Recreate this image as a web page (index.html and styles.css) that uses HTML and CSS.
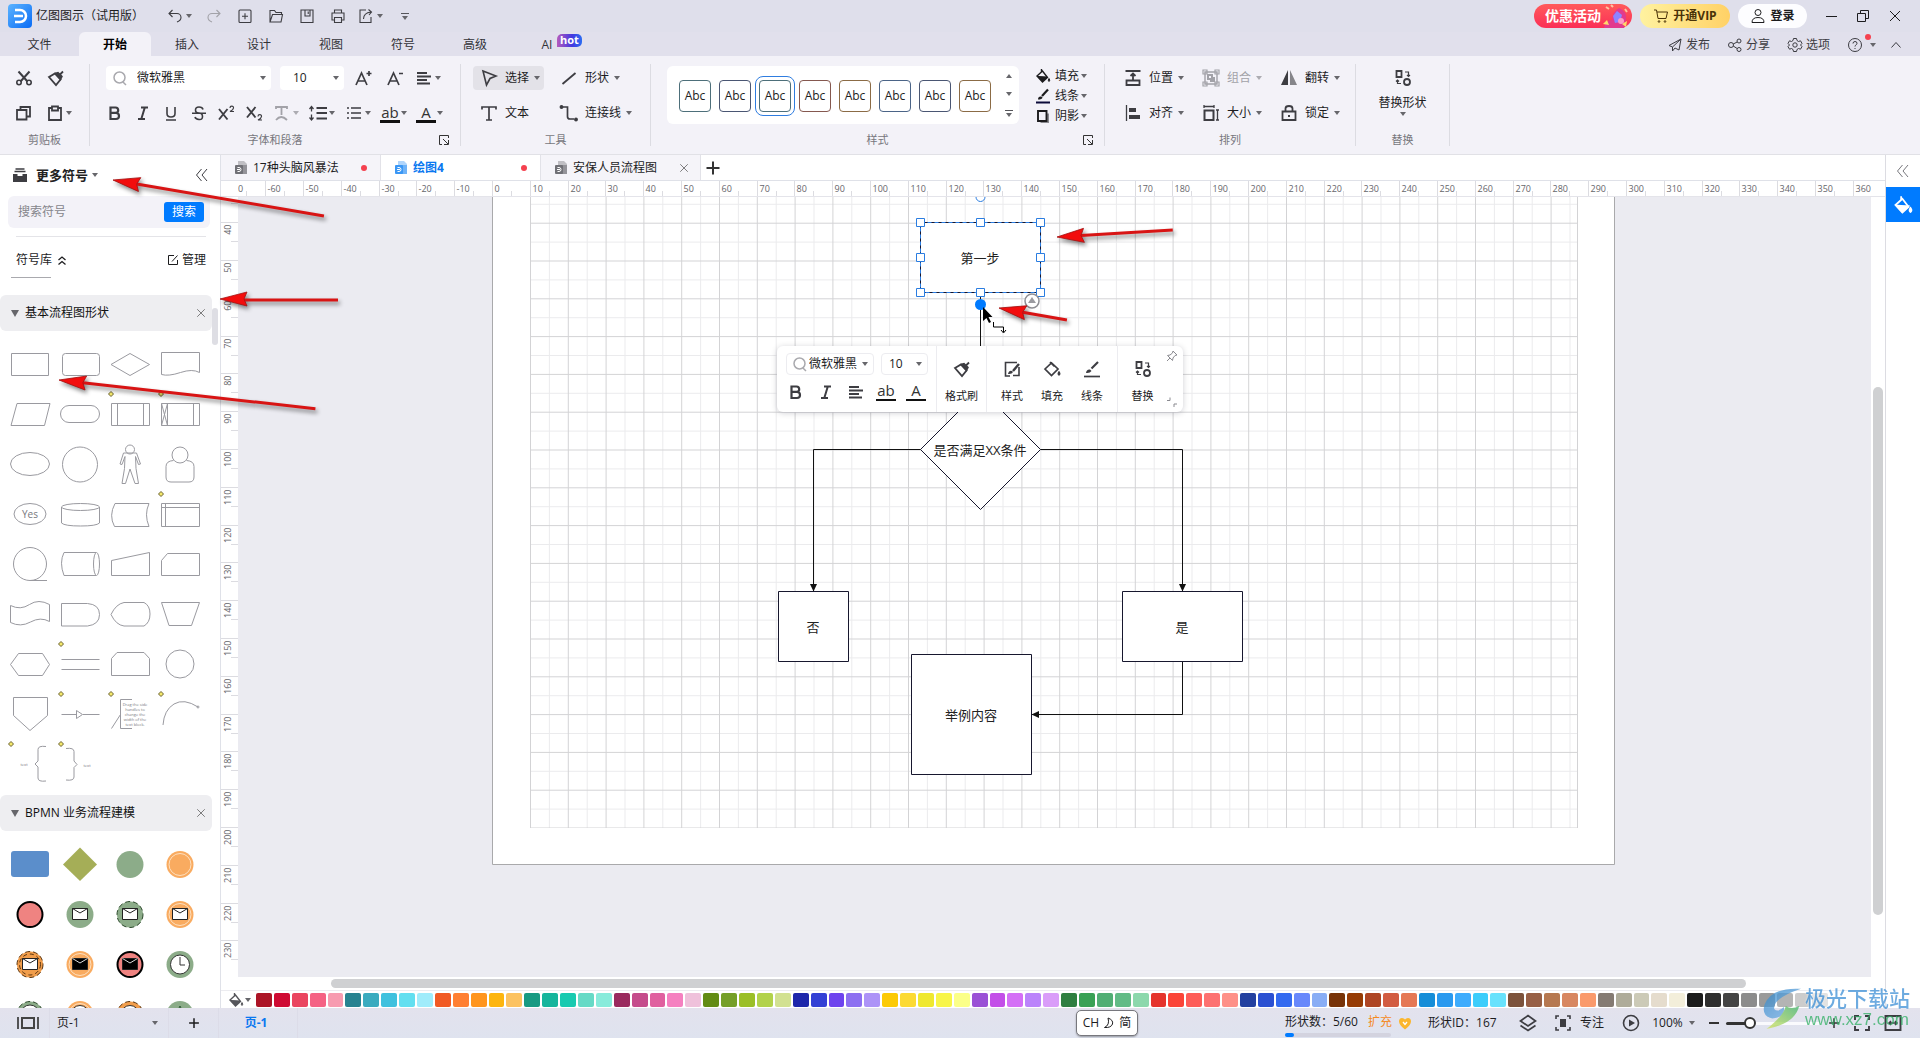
FILE: index.html
```html
<!DOCTYPE html>
<html lang="zh-CN">
<head>
<meta charset="utf-8">
<title>亿图图示</title>
<link rel="stylesheet" href="styles.css">
</head>
<body>
<svg class="sprite" aria-hidden="true">
  <defs>
    <linearGradient id="g-logo" x1="0" y1="0" x2="1" y2="1"><stop offset="0" stop-color="#5cb4ff"/><stop offset="1" stop-color="#0a6cf5"/></linearGradient>
    <linearGradient id="g-swirl" x1="0" y1="0" x2="1" y2="1"><stop offset="0" stop-color="#2f86c8"/><stop offset="1" stop-color="#7fb6ea"/></linearGradient>
    <linearGradient id="g-swirl2" x1="1" y1="0" x2="0" y2="1"><stop offset="0" stop-color="#3fb56a"/><stop offset="1" stop-color="#d5e35a"/></linearGradient>
  </defs>
  <symbol id="undo" viewBox="0 0 20 20"><path d="M7.500 4 4 7.500 7.500 11M4.500 7.500H12a4 4 0 0 1 4 4q0 3-4 4.500"/></symbol>
  <symbol id="redo" viewBox="0 0 20 20"><path d="M12.500 4 16 7.500 12.500 11M15.500 7.500H8a4 4 0 0 0-4 4q0 3 4 4.500"/></symbol>
  <symbol id="new" viewBox="0 0 20 20"><rect x="4" y="4" width="12" height="12.500" rx="1"/><path d="M10 7.200v6M7 10.200h6"/></symbol>
  <symbol id="open" viewBox="0 0 20 20"><path d="M4 16V4.500h4.500l1.500 2h5.500v2M4 16h11l1.500-7.500H6.500z"/></symbol>
  <symbol id="save" viewBox="0 0 20 20"><path d="M4 4h12v12.500H4zM8 4v6h5V4M11.200 5.500v2.500"/></symbol>
  <symbol id="print" viewBox="0 0 20 20"><path d="M6.500 7V4h7v3M6.500 14H4V7h12v7h-2.500M6.500 11.500h7v5h-7z"/></symbol>
  <symbol id="export" viewBox="0 0 20 20"><path d="M10 4H4v12.500h11V11M7.500 13q0-6 7.500-7M12.500 3.500 15.500 6l-2.500 3"/></symbol>
  <symbol id="min" viewBox="0 0 16 16"><path d="M3 8.500h11"/></symbol>
  <symbol id="restore" viewBox="0 0 16 16"><path d="M2.500 5.500h8v8h-8zM5.500 5.500v-3h8v8h-3"/></symbol>
  <symbol id="close" viewBox="0 0 16 16"><path d="m3 3 10 10M13 3 3 13"/></symbol>
  <symbol id="cart" viewBox="0 0 16 16"><path d="M1 2h2.500l1.500 8.500h8L14.500 4H4"/><circle cx="6" cy="13.500" r=".8"/><circle cx="12" cy="13.500" r=".8"/></symbol>
  <symbol id="user" viewBox="0 0 16 16"><circle cx="8" cy="4.500" r="3"/><path d="M2 14.500q0-5 6-5t6 5z"/></symbol>
  <symbol id="plane" viewBox="0 0 16 16"><path d="M14 2 2 8.500l3.500 1.500L14 2l-2 11-4-2M5.500 10v4L8 11"/></symbol>
  <symbol id="share" viewBox="0 0 16 16"><circle cx="4" cy="8" r="2.500"/><circle cx="12" cy="4" r="2"/><circle cx="12" cy="12.500" r="2"/><path d="m6.200 7 4-2M6.200 9l4 2.500"/></symbol>
  <symbol id="gear" viewBox="0 0 16 16"><path d="M6.500 1.500h3l.5 2 1.500 1 2-.7 1.500 2.600-1.500 1.600 1.500 1.600-1.500 2.600-2-.7-1.500 1-.5 2h-3l-.5-2-1.500-1-2 .7L1 9.600 2.500 8 1 6.400l1.500-2.600 2 .7 1.500-1z"/><circle cx="8" cy="8" r="2.200"/></symbol>
  <symbol id="help" viewBox="0 0 16 16"><circle cx="8" cy="8" r="6.500"/><path d="M6 6.500q0-2 2-2t2 1.800q0 1-1 1.600T8 9.500M8 11v1"/></symbol>
  <symbol id="up" viewBox="0 0 16 16"><path d="m3.500 10.500 4.500-5 4.500 5"/></symbol>
  <symbol id="collapse" viewBox="0 0 16 16"><path d="M7.500 2 2.500 8l5 6M13 2 8 8l5 6"/></symbol>
  <symbol id="cut" viewBox="0 0 20 20"><path d="m4.500 3.500 9 10M15.500 3.500l-9 10" stroke-width="2"/><circle cx="5" cy="14.500" r="2.200" stroke-width="1.600"/><circle cx="15" cy="14.500" r="2.200" stroke-width="1.600"/></symbol>
  <symbol id="painter" viewBox="0 0 20 20"><path d="m3 9 6-3.500 5.500 6L10 17 3 9zM11 6.500l3 3M12.500 8 17 3.500" stroke-width="1.800"/><path d="m9 5.500 3-1 4 4-1.500 3z" fill="currentColor"/></symbol>
  <symbol id="copy" viewBox="0 0 20 20"><path d="M3 7h9.500v9.500H3zM6.500 7V4H16v9.500h-3.500" stroke-width="1.800"/></symbol>
  <symbol id="paste" viewBox="0 0 20 20"><path d="M7 5H4v12h12V5h-3" stroke-width="1.800"/><path d="M7 3.500h6v4H7z" stroke-width="1.800"/></symbol>
  <symbol id="search" viewBox="0 0 16 16"><circle cx="7.500" cy="7.500" r="5.500" stroke-width="1.500"/><path d="m11 12 3 3" stroke-width="1.500"/></symbol>
  <symbol id="fontup" viewBox="0 0 20 20"><path d="M3 17 8.500 5 14 17M5 13h7M13.500 5.500h5M16 3v5" stroke-width="1.700"/></symbol>
  <symbol id="fontdown" viewBox="0 0 20 20"><path d="M3 17 8.500 5 14 17M5 13h7M14 5.500h4" stroke-width="1.700"/></symbol>
  <symbol id="align" viewBox="0 0 20 20"><path d="M3 5h10M3 8.500h14M3 12h10M3 15.500h13" stroke-width="1.800"/></symbol>
  <symbol id="bold" viewBox="0 0 20 20"><path d="M5.500 4.500h5a2.700 2.700 0 0 1 0 5.400h-5zM5.500 10h5.500a3 3 0 0 1 0 6H5.500z" stroke-width="2.200"/></symbol>
  <symbol id="italic" viewBox="0 0 20 20"><path d="M8 4.500h7M5 16h7M11.800 4.500 8.300 16" stroke-width="2"/></symbol>
  <symbol id="under" viewBox="0 0 20 20"><path d="M6 4v6.500q0 3.500 4 3.500t4-3.500V4M5 17h10" stroke-width="1.600"/></symbol>
  <symbol id="strike" viewBox="0 0 20 20"><path d="M14 6.500Q13.500 4 10 4T6.500 7 10 10t3.500 3.500-3.500 3-4-2.500M3 10.300h14" stroke-width="1.600"/></symbol>
  <symbol id="sup" viewBox="0 0 20 20"><path d="m2 6 8.500 10.500M10.500 6 2 16.500" stroke-width="1.900"/><path d="M13 5q0-1.800 1.800-1.800T16.500 5 13 8.500h4" stroke-width="1.200"/></symbol>
  <symbol id="sub" viewBox="0 0 20 20"><path d="m2 4 8.500 10.500M10.500 4 2 14.500" stroke-width="1.900"/><path d="M13 13.500q0-1.800 1.800-1.800t1.700 1.800T13 17h4" stroke-width="1.200"/></symbol>
  <symbol id="tstyle" viewBox="0 0 20 20"><path d="M4 6V4h11v2M9.500 4v8M4 17q5-6 11 0" stroke-width="1.800"/></symbol>
  <symbol id="linegap" viewBox="0 0 20 20"><path d="M8.500 5H19M8.500 10H19M8.500 15.500H19" stroke-width="1.800"/><path d="M3.500 3.500v5M3.500 11.500v5M1.500 6l2-2.500 2 2.500M1.500 14.500l2 2.500 2-2.500" stroke-width="1.300"/></symbol>
  <symbol id="list" viewBox="0 0 20 20"><path d="M7 5h10M7 10h10M7 15h10M3 5h2M3 10h2M3 15h2" stroke-width="1.700"/></symbol>
  <symbol id="cursor" viewBox="0 0 20 20"><path d="m4 3 13 5-6 2.500L7.500 17z" stroke-width="1.600"/></symbol>
  <symbol id="slash" viewBox="0 0 20 20"><path d="M3.500 16 16.500 5" stroke-width="1.800"/></symbol>
  <symbol id="text" viewBox="0 0 20 20"><path d="M3 6.500V4h14v2.500M10 4v13M7 17h6" stroke-width="1.700"/></symbol>
  <symbol id="connector" viewBox="0 0 20 20"><path d="M4 4h4.500v9.500q0 2.500 2.500 2.500h4" stroke-width="1.700"/><circle cx="2.500" cy="4" r="1.200" fill="currentColor"/><circle cx="17" cy="16.500" r="1.200" fill="currentColor"/></symbol>
  <symbol id="bucket" viewBox="0 0 16 16"><path d="m2 8 5.500-5 5 6.500-5 4.500zM6.500 1v3" stroke-width="1.400"/><path d="m3 8.500 9 .5-4.500 4.500zM14 10.500q1.500 2 0 3-1.500-1 0-3z" fill="currentColor"/></symbol>
  <symbol id="bucketline" viewBox="0 0 20 20"><path d="m3 10 6.500-6 6.500 6-6.500 6.500zM8 3l4.500 4.500" stroke-width="1.700"/><path d="M17 13q1.500 2 0 3-1.500-1 0-3z" fill="currentColor"/></symbol>
  <symbol id="pen" viewBox="0 0 16 16"><path d="M13 1.500 7 8" stroke-width="2.200"/><path d="M3 11.500q0-3.500 3.500-3l1 1Q7 11.500 3 11.500z" fill="currentColor" stroke="none"/><path d="M1 14.500h14" stroke="#0b0b3a" stroke-width="2"/></symbol>
  <symbol id="shadow" viewBox="0 0 16 16"><path d="M5.500 5.500H14V15H5.500z" fill="#8a8a8f" stroke="none"/><path d="M3 3h8.500v10H3z" fill="#f3f2f8" stroke-width="1.900"/></symbol>
  <symbol id="position" viewBox="0 0 20 20"><path d="M2.500 3h15M10 12V5.500M7.500 8 10 5.500 12.500 8M3.500 12.500h13V17h-13z" stroke-width="1.800"/></symbol>
  <symbol id="group" viewBox="0 0 20 20"><path d="M4 4h12v12H4z" stroke-width="1.400"/><path d="M2 2h4v4H2zM14 2h4v4h-4zM2 14h4v4H2zM14 14h4v4h-4z" stroke-width="1.200"/><path d="M7 7h4v4H7zM13 9v4H9" stroke-width="2"/></symbol>
  <symbol id="flip" viewBox="0 0 20 20"><path d="M9 2v15H2z" fill="currentColor" stroke="none"/><path d="M11 2v15h7z" fill="#85858a" stroke="none"/></symbol>
  <symbol id="alignobj" viewBox="0 0 20 20"><path d="M3.500 2v16" stroke-width="1.300"/><path d="M6 5h7v4H6zM6 12h11v4H6z" fill="currentColor" stroke="none"/></symbol>
  <symbol id="size" viewBox="0 0 20 20"><path d="M3.500 7.500h9V17h-9z" stroke-width="2"/><path d="M3 3.500h10M3 2v3M13 2v3M16.500 7v10M15 7h3M15 17h3" stroke-width="1.300"/></symbol>
  <symbol id="lock" viewBox="0 0 20 20"><path d="M3.500 8.500h13V17h-13zM6.500 8V5.500Q6.500 3 10 3t3.500 2.500V8" stroke-width="1.800"/><path d="M9 12h2v2H9z" fill="currentColor" stroke="none"/></symbol>
  <symbol id="swap" viewBox="0 0 20 20"><path d="M3.500 3h5v6h-5z" stroke-width="1.800"/><circle cx="14" cy="14" r="3" stroke-width="1.800"/><path d="M12 4h3.500v4M14 7l1.500 1.500L17 7M8 15.500H4.500V12M3 13.500 4.500 12 6 13.500" stroke-width="1.200"/></symbol>
  <symbol id="launch" viewBox="0 0 12 12"><path d="M4 10.500H1.500v-9h9V4M5 5l5 5M10.500 6v4.500H6"/></symbol>
  <symbol id="library" viewBox="0 0 16 16"><path d="M3.500 2h9M2.500 4.500h11" stroke-width="1.300"/><path d="M1 7h4.500v2h5V7H15v8H1z" fill="currentColor" stroke="none"/></symbol>
  <symbol id="dblup" viewBox="0 0 12 12"><path d="m2.500 6 3.500-3 3.500 3M2.500 10.500l3.500-3 3.500 3" stroke-width="1.300"/></symbol>
  <symbol id="edit" viewBox="0 0 12 12"><path d="M7 1.500H1.500v9h9V6M5 7.500 10.500 1.500"/></symbol>
  <symbol id="doc" viewBox="0 0 16 16"><path d="M5 1h6l3 3v10H5z" fill="currentColor" opacity=".4" stroke="none"/><path d="M9 5h5v9H9z" fill="currentColor" opacity=".55" stroke="none"/><rect x="2" y="5" width="8" height="9" rx="1" fill="currentColor" stroke="none"/><path d="M4.500 7.500H6q2 0 2 2t-2 2H4.500M4 9.500h3" stroke="#fff"/></symbol>
  <symbol id="plus" viewBox="0 0 16 16"><path d="M8 1.500v13M1.500 8h13" stroke-width="2"/></symbol>
  <symbol id="brushbox" viewBox="0 0 20 20"><path d="M8 17H3.500V3.500H15M17 8v8.500h-6" stroke-width="1.600"/><path d="m17 5-6 7" stroke-width="2.400"/><path d="M6 15q1-4 4-3l1 1q-1 2.500-5 2z" fill="currentColor" stroke="none"/></symbol>
  <symbol id="penline" viewBox="0 0 20 20"><path d="M16 3 9.500 9.500" stroke-width="2.200"/><path d="M4 14q.5-4 4-3.500l1.500 1.500Q8 14.500 4 14z" fill="currentColor" stroke="none"/><path d="M2 17.500h16" stroke-width="1.700"/></symbol>
  <symbol id="pin" viewBox="0 0 12 12"><path d="m7 1 4 4-2 .5L7 8l-.5 2.500-5-5L4 5l2.500-2zM4 8l-3 3"/></symbol>
  <symbol id="corner" viewBox="0 0 12 12"><path d="M4 1.500V4.500H1M8 11V8h3"/></symbol>
  <symbol id="pages" viewBox="0 0 24 16"><path d="M2 2v12M22 2v12" stroke-width="1.800"/><path d="M6 3h12v10H6z" stroke-width="2"/></symbol>
  <symbol id="layers" viewBox="0 0 20 20"><path d="m2.500 8 7.500-5.500L17.500 8 10 13z" stroke-width="1.700"/><path d="m2.500 12.500 7.500 5 7.500-5" stroke-width="1.700"/></symbol>
  <symbol id="focus" viewBox="0 0 20 20"><path d="M6 3H3v3M14 3h3v3M6 17H3v-3M14 17h3v-3" stroke-width="1.600"/><path d="M7 6h6v8H7z" fill="currentColor" stroke="none"/></symbol>
  <symbol id="play" viewBox="0 0 20 20"><circle cx="10" cy="10" r="7.500" stroke-width="1.600"/><path d="m8 6.500 6 3.500-6 3.500z" fill="currentColor" stroke="none"/></symbol>
  <symbol id="full" viewBox="0 0 20 20"><path d="M7 3H3v4M13 3h4v4M7 17H3v-4M13 17h4v-4" stroke-width="1.900"/></symbol>
  <symbol id="fit" viewBox="0 0 20 20"><path d="M2.500 3h15v14h-15z" stroke-width="1.900"/><path d="M6 10h8M8 8l-2 2 2 2M12 8l2 2-2 2" stroke-width="1.500"/></symbol>
  <symbol id="heart" viewBox="0 0 16 16"><path d="M8 14.500Q2 10 2 6.500 2 3 5 3q2 0 3 1.500Q9 3 11 3q3 0 3 3.500 0 3.500-6 8z" fill="#fbb62c" stroke="none"/><path d="m6 7 2 2.500L10 7" stroke="#fff" stroke-width="1.300"/></symbol>
  <symbol id="moon" viewBox="0 0 12 12"><path d="M5 1q5.500 2 4.500 6-1.500 4-8 3.500Q7 8 5 1z"/></symbol>
  <symbol id="handle" viewBox="0 0 6 6"><path d="m3 .5 2.500 2.500L3 5.500.5 3z" fill="#f4e96a" stroke="#6a6130"/></symbol>
  <symbol id="env" viewBox="0 0 16 12"><path d="M.5.500h15v11H.5z" fill="#fff"/><path d="m.5.500 7.500 4.500 7.500-4.500"/></symbol>
  <symbol id="envdark" viewBox="0 0 16 12"><path d="M.5.500h15v11H.5z" fill="#000"/><path d="m.5.500 7.500 4.500 7.500-4.500" stroke="#ddd"/></symbol>
</svg>

<header class="titlebar">
  <div class="brand">
    <svg class="logo" viewBox="0 0 24 24"><rect width="24" height="24" rx="4" fill="url(#g-logo)"/><path d="M7 6h5a6 6 0 0 1 0 12H7M6 12h9" fill="none" stroke="#fff" stroke-width="2.500"/></svg>
    <span>亿图图示（试用版）</span>
  </div>
  <div class="quick">
    <button class="drop" aria-label="撤销"><svg class="i thin"><use href="#undo"/></svg><span class="caret"></span></button>
    <button class="q off" aria-label="重做"><svg class="i thin"><use href="#redo"/></svg></button>
    <button class="q" aria-label="新建"><svg class="i thin"><use href="#new"/></svg></button>
    <button class="q" aria-label="打开"><svg class="i thin"><use href="#open"/></svg></button>
    <button class="q" aria-label="保存"><svg class="i thin"><use href="#save"/></svg></button>
    <button class="q" aria-label="打印"><svg class="i thin"><use href="#print"/></svg></button>
    <button class="drop" aria-label="导出"><svg class="i thin"><use href="#export"/></svg><span class="caret"></span></button>
    <button class="q" aria-label="自定义"><span class="caret lined"></span></button>
  </div>
  <div class="account">
    <button class="pill promo">优惠活动<svg viewBox="0 0 28 24"><path d="M3 24q2-8 8-8 1-9 7-12 8 3 7 12l-2 8z" fill="#e23a8e"/><path d="m12 12 4-5 5 4-2 7-5 1z" fill="#8c84ff"/><path d="m2 20 4-4 2 5zM21 20l5-3-1 6z" fill="#ffd76a"/><path d="M5 3l3 2M10 1l2 2M24 5l2 3" stroke="#ffc3a0" stroke-width="2"/><circle cx="20" cy="17" r="3" fill="#ff9ac4"/></svg></button>
    <button class="pill vip"><svg class="s"><use href="#cart"/></svg>开通VIP</button>
    <button class="pill login"><svg class="s"><use href="#user"/></svg>登录</button>
    <div class="winbtns">
      <button aria-label="最小化"><svg class="s"><use href="#min"/></svg></button>
      <button aria-label="还原"><svg class="s"><use href="#restore"/></svg></button>
      <button aria-label="关闭"><svg class="s"><use href="#close"/></svg></button>
    </div>
  </div>
</header>

<nav class="menubar">
  <div class="menus">
    <button class="first">文件</button><button class="active">开始</button><button>插入</button><button>设计</button><button>视图</button><button>符号</button><button>高级</button><button>AI<span class="hot">hot</span></button>
  </div>
  <div class="menuright">
    <button><svg class="s"><use href="#plane"/></svg>发布</button>
    <button><svg class="s"><use href="#share"/></svg>分享</button>
    <button><svg class="s"><use href="#gear"/></svg>选项</button>
    <button class="helpbtn" aria-label="帮助"><svg class="s"><use href="#help"/></svg><i class="dot"></i><span class="caret"></span></button>
    <button aria-label="收起功能区"><svg class="s"><use href="#up"/></svg></button>
  </div>
</nav>

<section class="ribbon">
  <div class="group clip">
    <div class="row"><button class="b" aria-label="剪切"><svg class="i"><use href="#cut"/></svg></button><button class="b" aria-label="格式刷"><svg class="i"><use href="#painter"/></svg></button></div>
    <div class="row"><button class="b" aria-label="复制"><svg class="i"><use href="#copy"/></svg></button><button class="drop" aria-label="粘贴"><svg class="i"><use href="#paste"/></svg><span class="caret"></span></button></div>
    <div class="label"><span>剪贴板</span></div>
  </div>
  <div class="group font">
    <div class="row fields">
      <label class="combo wide"><svg class="s faint"><use href="#search"/></svg><select aria-label="字体"><option>微软雅黑</option></select><span class="caret"></span></label>
      <label class="combo num"><select aria-label="字号"><option>10</option></select><span class="caret"></span></label>
      <button class="b w32" aria-label="增大字号"><svg class="i"><use href="#fontup"/></svg></button><button class="b w32" aria-label="减小字号"><svg class="i"><use href="#fontdown"/></svg></button><button class="drop" aria-label="对齐"><svg class="i"><use href="#align"/></svg><span class="caret"></span></button>
    </div>
    <div class="row">
      <button class="b" aria-label="加粗"><svg class="i"><use href="#bold"/></svg></button><button class="b" aria-label="斜体"><svg class="i"><use href="#italic"/></svg></button><button class="b" aria-label="下划线"><svg class="i"><use href="#under"/></svg></button><button class="b" aria-label="删除线"><svg class="i"><use href="#strike"/></svg></button><button class="b" aria-label="上标"><svg class="i"><use href="#sup"/></svg></button><button class="b" aria-label="下标"><svg class="i"><use href="#sub"/></svg></button>
      <button class="drop off" aria-label="文字样式"><svg class="i"><use href="#tstyle"/></svg><span class="caret"></span></button><button class="drop" aria-label="行距"><svg class="i"><use href="#linegap"/></svg><span class="caret"></span></button><button class="drop" aria-label="列表"><svg class="i"><use href="#list"/></svg><span class="caret"></span></button><button class="drop"><span class="glyph">ab</span><span class="caret"></span></button><button class="drop"><span class="glyph">A</span><span class="caret"></span></button>
    </div>
    <div class="label"><span>字体和段落</span><button class="launch" aria-label="更多字体设置"><svg><use href="#launch"/></svg></button></div>
  </div>
  <div class="group tools">
    <div class="row"><button class="tool on"><svg class="i"><use href="#cursor"/></svg><span>选择</span><span class="caret"></span></button><button class="tool"><svg class="i"><use href="#slash"/></svg><span>形状</span><span class="caret"></span></button></div>
    <div class="row"><button class="tool"><svg class="i"><use href="#text"/></svg><span>文本</span></button><button class="tool"><svg class="i"><use href="#connector"/></svg><span>连接线</span><span class="caret"></span></button></div>
    <div class="label"><span>工具</span></div>
  </div>
  <div class="group styles">
    <div class="stylebody">
      <div class="gallery">
        <button class="c1">Abc</button><button class="c2">Abc</button><button class="c1 sel">Abc</button><button class="c3">Abc</button><button class="c4">Abc</button><button class="c5">Abc</button><button class="c2">Abc</button><button class="c4">Abc</button>
        <div class="scroller"><span class="caret flip"></span><span class="caret"></span><span class="caret lined"></span></div>
      </div>
      <div class="stack">
        <button><svg class="s"><use href="#bucket"/></svg><span>填充</span><span class="caret"></span></button>
        <button><svg class="s"><use href="#pen"/></svg><span>线条</span><span class="caret"></span></button>
        <button><svg class="s"><use href="#shadow"/></svg><span>阴影</span><span class="caret"></span></button>
      </div>
    </div>
    <div class="label"><span>样式</span><button class="launch" aria-label="更多样式设置"><svg><use href="#launch"/></svg></button></div>
  </div>
  <div class="group arrange">
    <div class="row"><button class="tool"><svg class="i"><use href="#position"/></svg><span>位置</span><span class="caret"></span></button><button class="tool off"><svg class="i"><use href="#group"/></svg><span>组合</span><span class="caret"></span></button><button class="tool"><svg class="i"><use href="#flip"/></svg><span>翻转</span><span class="caret"></span></button></div>
    <div class="row"><button class="tool"><svg class="i"><use href="#alignobj"/></svg><span>对齐</span><span class="caret"></span></button><button class="tool"><svg class="i"><use href="#size"/></svg><span>大小</span><span class="caret"></span></button><button class="tool"><svg class="i"><use href="#lock"/></svg><span>锁定</span><span class="caret"></span></button></div>
    <div class="label"><span>排列</span></div>
  </div>
  <div class="group replace">
    <button class="tall"><svg class="i"><use href="#swap"/></svg><span>替换形状</span><span class="caret"></span></button>
    <div class="label"><span>替换</span></div>
  </div>
</section>

<main class="workspace">
  <aside class="sidebar">
    <div class="sidehead"><svg class="s"><use href="#library"/></svg><button class="more">更多符号<span class="caret"></span></button><button class="fold" aria-label="收起"><svg class="s"><use href="#collapse"/></svg></button></div>
    <form class="search"><input type="text" placeholder="搜索符号" aria-label="搜索符号"><button type="button">搜索</button></form>
    <div class="libhead"><button>符号库<svg class="xs"><use href="#dblup"/></svg></button><button><svg class="xs"><use href="#edit"/></svg>管理</button></div>
    <div class="peek"></div>
    <div class="lists">
      <div class="secthead"><span class="caret big"></span><h2>基本流程图形状</h2><button aria-label="关闭"><svg class="s"><use href="#close"/></svg></button></div>
      <div class="symbols">
        <svg viewBox="0 0 50 50"><path d="M6.500 14.500h37v22h-37z"/></svg>
        <svg viewBox="0 0 50 50"><rect x="7.500" y="14.500" width="37" height="22" rx="3"/></svg>
        <svg viewBox="0 0 50 50"><path d="m6 25.500 19-11 19.500 11-19.500 11z"/></svg>
        <svg viewBox="0 0 50 50"><path d="M6.500 13.500h38v20q-7-4-19 0t-19 2z"/></svg>
        <svg viewBox="0 0 50 50"><path d="M12 14.500h33l-5.500 22H6z"/></svg>
        <svg viewBox="0 0 50 50"><rect x="5.500" y="16.500" width="39" height="17" rx="8.500"/></svg>
        <svg viewBox="0 0 50 50"><path d="M6.500 14.500h38v22h-38zM12.500 14.500v22M38.500 14.500v22"/><use href="#handle" x="3" y="2" width="6" height="6"/></svg>
        <svg viewBox="0 0 50 50"><path d="M6.500 14.500h38v22h-38zM12.500 14.500v22M38.500 14.500v22M6.500 14.500l6 22M12.500 14.500l-6 22"/><use href="#handle" x="3" y="2" width="6" height="6"/></svg>
        <svg viewBox="0 0 50 50"><ellipse cx="25" cy="25" rx="19.500" ry="11.500"/></svg>
        <svg viewBox="0 0 50 50"><circle cx="25" cy="25.500" r="17.500"/></svg>
        <svg viewBox="0 0 50 50"><circle cx="25" cy="10.500" r="4.500"/><path d="M18.500 14h13l4 11-2 .5-3-8 .5 12 2.500 15h-3.500L25 30l-4.500 14.500H17L19.500 29.500 20 17.500l-3 8-2-.5z"/></svg>
        <svg viewBox="0 0 50 50"><circle cx="25" cy="16" r="8"/><path d="M18.500 21.500q-7.500.5-7.500 6V38q0 5 5 5h18q5 0 5-5V27.500q0-5.500-7.500-6"/></svg>
        <svg viewBox="0 0 50 50"><ellipse cx="25" cy="25" rx="16" ry="10.500"/><text x="25" y="29" text-anchor="middle" class="yes">Yes</text></svg>
        <svg viewBox="0 0 50 50"><ellipse cx="25.500" cy="18" rx="19" ry="3.500"/><path d="M6.500 18v16q3 3 19 3t19-3V18"/></svg>
        <svg viewBox="0 0 50 50"><path d="M10 14.500h34q-5 11 0 23H9.500q-6-11 .5-23z"/></svg>
        <svg viewBox="0 0 50 50"><path d="M6.500 14.500h38v23h-38zM10.500 14.500v23M6.500 18.500h38"/><use href="#handle" x="3" y="2" width="6" height="6"/></svg>
        <svg viewBox="0 0 50 50"><circle cx="25" cy="25" r="16.500"/><path d="M25 41.500h17"/></svg>
        <svg viewBox="0 0 50 50"><path d="M41 13.500H9q-5 10 0 23h32"/><ellipse cx="41.500" cy="25" rx="3" ry="11.500"/></svg>
        <svg viewBox="0 0 50 50"><path d="M6.500 21.500 44.500 13.500v23h-38z"/></svg>
        <svg viewBox="0 0 50 50"><path d="M12.500 14.500h32v22h-38v-15z"/></svg>
        <svg viewBox="0 0 50 50"><path d="M5.500 16.500q10 5 19-1t20 0v17q-9-5-19 .5t-20 .5z"/></svg>
        <svg viewBox="0 0 50 50"><path d="M6.500 14.500h26q12 1 12 11t-12 11.500h-26z"/></svg>
        <svg viewBox="0 0 50 50"><path d="M19 13.500h20q6 3 6 11.500t-6 12H19Q11 36 6 25.500 11 15 19 13.500z"/></svg>
        <svg viewBox="0 0 50 50"><path d="M6.500 13.500h38l-8 23H14z"/></svg>
        <svg viewBox="0 0 50 50"><path d="m5.500 25.500 8-11h24l7 11-7 11h-24z"/></svg>
        <svg viewBox="0 0 50 50"><path d="M6.500 20.500h38M6.500 30.500h38"/><use href="#handle" x="3" y="2" width="6" height="6"/></svg>
        <svg viewBox="0 0 50 50"><path d="M12 13.500h27l5.500 6v17h-38v-17z"/></svg>
        <svg viewBox="0 0 50 50"><circle cx="25" cy="25" r="14"/></svg>
        <svg viewBox="0 0 50 50"><path d="M8.500 8.500h34v18L25 41.500l-16.500-15z"/></svg>
        <svg viewBox="0 0 50 50"><path d="M6.500 25.500h15M28 25.500h16.500M21.500 21.500v8l6-4z"/><use href="#handle" x="3" y="2" width="6" height="6"/></svg>
        <svg viewBox="0 0 50 50"><path d="M27 10.500H15.500v29H27M15.500 25.500l-9 14"/><g class="tiny"><text x="30" y="17">Drag the side</text><text x="30" y="22">handles to</text><text x="30" y="27">change the</text><text x="30" y="32">width of the</text><text x="30" y="37">text block.</text></g><use href="#handle" x="3" y="2" width="6" height="6"/></svg>
        <svg viewBox="0 0 50 50"><path d="M8 36q1-15 11-21t24 3"/><circle cx="43" cy="18" r="1"/><use href="#handle" x="3" y="2" width="6" height="6"/></svg>
        <svg viewBox="0 0 50 50"><path d="M41 7.500q-8-1-8 3V22l-3 3 3 3v11q0 4 8 3"/><text x="19" y="27" class="tiny">text</text><use href="#handle" x="3" y="2" width="6" height="6"/></svg>
        <svg viewBox="0 0 50 50"><path d="M11 9.500q8-1 8 3V22l3 3.500-3 3V38q0 4-8 3"/><text x="32" y="28" class="tiny">text</text><use href="#handle" x="3" y="2" width="6" height="6"/></svg>
      </div>
      <div class="secthead"><span class="caret big"></span><h2>BPMN 业务流程建模</h2><button aria-label="关闭"><svg class="s"><use href="#close"/></svg></button></div>
      <div class="symbols bpmn">
        <svg viewBox="0 0 50 50"><rect x="6" y="12" width="38" height="26" rx="3" fill="#5b8ecb"/></svg>
        <svg viewBox="0 0 50 50"><path d="m25 8.500 17 17-17 16.500L8 25.500z" fill="#a5ae57"/></svg>
        <svg viewBox="0 0 50 50"><circle cx="25" cy="25.500" r="13.500" fill="#8cac89"/></svg>
        <svg viewBox="0 0 50 50"><circle cx="25" cy="25.500" r="13.500" fill="#f9ab60"/><circle cx="25" cy="25.500" r="11" stroke="#fde0c0"/></svg>
        <svg viewBox="0 0 50 50"><circle cx="25" cy="25.500" r="12.500" fill="#ef8381" stroke="#000" stroke-width="2"/></svg>
        <svg viewBox="0 0 50 50"><circle cx="25" cy="25.500" r="13.500" fill="#8cac89"/><use href="#env" x="17" y="19" width="16" height="12" class="ink"/></svg>
        <svg viewBox="0 0 50 50"><circle cx="25" cy="25.500" r="13" fill="#8cac89" stroke="#2d4a2c" stroke-dasharray="5 3"/><use href="#env" x="17" y="19" width="16" height="12" class="ink"/></svg>
        <svg viewBox="0 0 50 50"><circle cx="25" cy="25.500" r="13.500" fill="#f9ab60"/><circle cx="25" cy="25.500" r="11" stroke="#fde0c0"/><use href="#env" x="17" y="19" width="16" height="12" class="ink"/></svg>
        <svg viewBox="0 0 50 50"><circle cx="25" cy="25.500" r="13" fill="#f19d4b" stroke="#5b3510" stroke-dasharray="5 3"/><circle cx="25" cy="25.500" r="10.500" stroke="#5b3510" stroke-dasharray="4 3"/><use href="#env" x="17" y="19" width="16" height="12" class="ink"/></svg>
        <svg viewBox="0 0 50 50"><circle cx="25" cy="25.500" r="13.500" fill="#f9ab60"/><circle cx="25" cy="25.500" r="11" stroke="#fde0c0"/><use href="#envdark" x="17" y="19" width="16" height="12" class="ink"/></svg>
        <svg viewBox="0 0 50 50"><circle cx="25" cy="25.500" r="12.500" fill="#ef8381" stroke="#000" stroke-width="2"/><use href="#envdark" x="17" y="19" width="16" height="12" class="ink"/></svg>
        <svg viewBox="0 0 50 50"><circle cx="25" cy="25.500" r="13.500" fill="#8cac89"/><circle cx="25" cy="25.500" r="9.500" fill="#fff" stroke="#333"/><path d="M25 18v8h5" stroke="#333"/></svg>
        <svg viewBox="0 0 50 50"><circle cx="25" cy="25.500" r="13" fill="#8cac89" stroke="#2d4a2c" stroke-dasharray="5 3"/><circle cx="25" cy="25.500" r="9.500" fill="#fff" stroke="#333"/></svg>
        <svg viewBox="0 0 50 50"><circle cx="25" cy="25.500" r="13.500" fill="#f9ab60"/><circle cx="25" cy="25.500" r="11" stroke="#fde0c0"/><circle cx="25" cy="25.500" r="9" fill="#fff" stroke="#333"/></svg>
        <svg viewBox="0 0 50 50"><circle cx="25" cy="25.500" r="13" fill="#f19d4b" stroke="#5b3510" stroke-dasharray="5 3"/><circle cx="25" cy="25.500" r="9" fill="#fff" stroke="#333"/></svg>
        <svg viewBox="0 0 50 50"><circle cx="25" cy="25.500" r="13.500" fill="#8cac89"/><path d="m25 17 7 15H18z" stroke="#2d5a35"/></svg>
      </div>
      <div class="sidethumb"></div>
    </div>
  </aside>

  <section class="editor">
    <div class="doctabs">
      <button class="doctab"><svg class="s"><use href="#doc"/></svg><span>17种头脑风暴法</span><i class="dot"></i></button>
      <button class="doctab current"><svg class="s"><use href="#doc"/></svg><span>绘图4</span><i class="dot"></i></button>
      <button class="doctab"><svg class="s"><use href="#doc"/></svg><span>安保人员流程图</span><svg class="xs"><use href="#close"/></svg></button>
      <button class="addtab" aria-label="新建绘图"><svg class="s"><use href="#plus"/></svg></button>
    </div>
    <div class="ruler-h"><svg id="rulerH"></svg></div>
    <div class="stage">
      <div class="ruler-v"><svg id="rulerV"></svg></div>
      <div class="canvas">
        <svg class="drawing">
          <defs>
            <pattern id="grid" x="530" y="71.500" width="37.800" height="37.800" patternUnits="userSpaceOnUse"><path d="M19.400 0v37.800M0 19.400h37.800" stroke="#ebebed"/><path d="M.5 0v37.800M0 .5h37.800" stroke="#d3d3d5"/></pattern>
            <marker id="tip" viewBox="0 0 8 8" refX="7" refY="4" markerWidth="8" markerHeight="8" markerUnits="userSpaceOnUse" orient="auto"><path d="M0 .5 7.500 4 0 7.500z" fill="#111"/></marker>
          </defs>
          <g transform="translate(-238 -197)">
            <path d="M492.500 100h1122v764.500h-1122z" fill="#fff" stroke="#a9a9ab"/>
            <path d="M530 100h1047v728H530z" fill="url(#grid)"/>
            <path d="M1577.500 190v638" stroke="#d3d3d5"/>
            <g class="shape">
              <path d="M920.500 222.500h120v70h-120zM920.500 449.500l60-60 60 60-60 60zM778.500 591.500h70v70h-70zM1122.500 591.500h120v70h-120zM911.500 654.500h120v120h-120z"/>
            </g>
            <g class="wire">
              <path d="M980.500 293v54M920.500 449.500h-107V591" marker-end="url(#tip)"/>
              <path d="M1040.500 449.500h142V591" marker-end="url(#tip)"/>
              <path d="M1182.500 662v52.500H1032" marker-end="url(#tip)"/>
            </g>
            <g class="caption">
              <text x="980" y="263">第一步</text><text x="980" y="455">是否满足XX条件</text><text x="813" y="632">否</text><text x="1182" y="632">是</text><text x="971" y="720">举例内容</text>
            </g>
            <g class="selection">
              <circle cx="980.500" cy="197" r="4.500"/>
              <path class="dash" d="M920.500 222.500h120v70h-120z"/>
              <path d="M916.500 218.500h8v8h-8zM976.500 218.500h8v8h-8zM1036.500 218.500h8v8h-8zM916.500 253.500h8v8h-8zM1036.500 253.500h8v8h-8zM916.500 288.500h8v8h-8zM976.500 288.500h8v8h-8zM1036.500 288.500h8v8h-8z"/>
            </g>
            <circle cx="980.500" cy="304.500" r="5.500" fill="#007bff"/>
            <circle cx="1032" cy="301" r="7" fill="#fff" stroke="#8f8f94" stroke-width="1.500"/><path d="m1032 297 4 6h-8z" fill="#9b9ba0"/>
            <path d="M983 307v14l3.500-3 2.500 5 2-1-2.500-5h4z" fill="#000"/><path d="M993.500 322v5h10v5M1001 330l2.500 3 2.500-3" fill="none" stroke="#000"/>
          </g>
        </svg>
        <div class="floatbar">
          <div class="fb-font">
            <div class="fb-row fb-fields"><label class="combo mini"><svg class="s faint"><use href="#search"/></svg><select aria-label="字体"><option>微软雅黑</option></select><span class="caret"></span></label><label class="combo mini small"><select aria-label="字号"><option>10</option></select><span class="caret"></span></label></div>
            <div class="fb-row"><button aria-label="加粗"><svg class="i"><use href="#bold"/></svg></button><button aria-label="斜体"><svg class="i"><use href="#italic"/></svg></button><button aria-label="对齐"><svg class="i"><use href="#align"/></svg></button><button><span class="glyph">ab</span></button><button><span class="glyph">A</span></button></div>
          </div>
          <div class="fb-group one"><button><svg class="i"><use href="#painter"/></svg>格式刷</button></div>
          <div class="fb-group three"><button><svg class="i"><use href="#brushbox"/></svg>样式</button><button><svg class="i"><use href="#bucketline"/></svg>填充</button><button><svg class="i"><use href="#penline"/></svg>线条</button></div>
          <div class="fb-group one"><button><svg class="i"><use href="#swap"/></svg>替换</button></div>
          <div class="fb-end"><svg class="xs"><use href="#pin"/></svg><svg class="xs"><use href="#corner"/></svg></div>
        </div>
      </div>
      <div class="vscroll"><div class="vthumb"></div></div>
    </div>
    <div class="hscroll"><div class="hthumb"></div></div>
    <div class="palette"><button class="fillpick" aria-label="填充颜色"><svg class="s"><use href="#bucket"/></svg><span class="caret"></span></button><div class="swatches" id="swatches"></div></div>
  </section>

  <aside class="rightbar"><button aria-label="展开"><svg class="s"><use href="#collapse"/></svg></button><button class="fillpanel" aria-label="填充面板"><svg class="i"><use href="#bucket"/></svg></button></aside>
</main>

<footer class="statusbar">
  <button class="pagesbtn" aria-label="页面视图"><svg class="pg"><use href="#pages"/></svg></button>
  <label class="pagesel"><select aria-label="页面"><option>页-1</option></select><span class="caret"></span></label>
  <button class="addpage" aria-label="添加页面"><svg class="xs"><use href="#plus"/></svg></button>
  <button class="pagetab">页-1</button>
  <span class="ime">CH<svg class="xs"><use href="#moon"/></svg>简</span>
  <div class="stat">
    <div class="count"><div><label for="used">形状数：5/60</label><a href="#">扩充</a></div><progress id="used" value="5" max="60"></progress></div>
    <svg class="s"><use href="#heart"/></svg>
    <span class="sid">形状ID：167</span>
    <button class="ic" aria-label="图层"><svg class="i"><use href="#layers"/></svg></button>
    <button class="focusbtn"><svg class="i"><use href="#focus"/></svg>专注</button>
    <button class="ic" aria-label="播放"><svg class="i"><use href="#play"/></svg></button>
    <button class="zoomval">100%<span class="caret"></span></button>
    <button class="zb" aria-label="缩小"><svg class="xs"><path d="M1 6h10" stroke-width="2"/></svg></button>
    <input type="range" min="0" max="100" value="22" aria-label="缩放">
    <button class="zb" aria-label="放大"><svg class="xs"><use href="#plus"/></svg></button>
    <button class="ic" aria-label="全屏"><svg class="i"><use href="#full"/></svg></button>
    <button class="ic" aria-label="适合窗口"><svg class="i"><use href="#fit"/></svg></button>
  </div>
</footer>

<svg class="annotations" aria-hidden="true">
  <defs><g id="head"><path d="M0 0 27-7 24 0l3 7z" fill="#f20d0d" stroke="#a51111" stroke-width=".8"/></g></defs>
  <g transform="translate(113 180) rotate(9.700)"><path class="shaft" d="M24 0h190"/><use href="#head"/></g>
  <g transform="translate(220 299)"><path class="shaft" d="M24 1h94"/><use href="#head"/></g>
  <g transform="translate(59 380) rotate(6.400)"><path class="shaft" d="M24 0h234"/><use href="#head"/></g>
  <g transform="translate(1057 237) rotate(-3.500)"><path class="shaft" d="M24 0h92"/><use href="#head"/></g>
  <g transform="translate(999 308) rotate(10)"><path class="shaft" d="M24 0h45"/><use href="#head"/></g>
</svg>
<div class="watermark" aria-hidden="true">
  <svg viewBox="0 0 48 48"><path d="M46 4Q16 2 8 20q-4 12 8 15 14-1 12-12-6 6-10 2Q16 14 46 4z" fill="url(#g-swirl)"/><path d="M44 22q-4 18-34 24 18-14 20-24 6 4 14 0z" fill="url(#g-swirl2)"/></svg>
  <div><b>极光下载站</b><span>www.xz7.com</span></div>
</div>
<script src="script.js"></script>
</body>
</html>
```
FILE: styles.css
```css
* { box-sizing: border-box; }
html, body { height: 100%; }
body {
  margin: 0; display: flex; flex-direction: column; overflow: hidden; position: relative;
  font: 12px/16px "Open Sans", "Noto Sans CJK SC", sans-serif; color: #1c1c1e; background: #e2e1ed;
}
button, select, input { font: inherit; color: inherit; border: 0; padding: 0; margin: 0; background: none; }
button { display: flex; align-items: center; justify-content: center; white-space: nowrap; }
select { appearance: none; flex: 1; min-width: 0; outline: 0; }
h2 { font: inherit; margin: 0; flex: 1; }
svg { display: block; flex: none; fill: none; stroke: currentColor; }
.sprite { position: absolute; width: 0; height: 0; }
.i { width: 20px; height: 20px; color: #3d3d42; stroke-width: 1.5; }
.thin { stroke-width: 1.1; }
.s { width: 16px; height: 16px; }
.xs { width: 12px; height: 12px; }
.faint { color: #a9a9ae; }
.caret { width: 0; height: 0; flex: none; margin: 0 1px; border: 3px solid transparent; border-top: 4px solid #66666b; border-bottom: 0; }
.caret.flip { border-top: 0; border-bottom: 4px solid #66666b; }
.caret.big { border-width: 7px 4px 0; }
.caret.lined { position: relative; margin-top: 4px; }
.caret.lined::before { content: ""; position: absolute; left: -4px; top: -7px; width: 8px; height: 1px; background: #55555a; }
.dot { width: 6px; height: 6px; border-radius: 50%; background: #f5414f; flex: none; }
.off, .off .i { color: #a2a2a8; }
.off .caret { opacity: .5; }

/* title bar */
.titlebar { height: 32px; flex: none; display: flex; background: #dfdfeb; }
.brand { flex: 0 0 162px; display: flex; align-items: center; gap: 4px; padding-left: 8px; white-space: nowrap; }
.logo { width: 24px; height: 24px; stroke: none; }
.quick { display: flex; flex: 1; }
.q { width: 31px; }
.drop { width: 36px; justify-content: flex-start; padding-left: 3px; }
.account { display: flex; align-items: center; gap: 8px; padding-right: 9px; }
.pill { height: 24px; border-radius: 12px; font-weight: 700; gap: 4px; }
.promo { width: 98px; padding-left: 8px; color: #fff; font-size: 14px; background: linear-gradient(#ff5a5a, #fb2f57); gap: 0; }
.promo svg { width: 28px; height: 24px; stroke: none; }
.vip { width: 90px; color: #4a3208; background: linear-gradient(90deg, #fff2a0, #ffd166); }
.login { width: 69px; color: #1c1c1e; background: #fdfdff; }
.winbtns { display: flex; }
.winbtns button { width: 32px; height: 32px; }

/* menu tabs */
.menubar { height: 24px; flex: none; display: flex; justify-content: space-between; background: #e1e0ec; }
.menus, .menuright { display: flex; }
.menus button { width: 72px; padding-top: 1px; color: #333338; position: relative; }
.menus .first { width: 79px; }
.menus .active { background: #f3f2f8; border-radius: 6px 6px 0 0; font-weight: 700; color: #000; }
.hot { position: absolute; left: 46px; top: 2px; height: 13px; padding: 0 3px; border-radius: 5px 5px 5px 0; background: linear-gradient(90deg, #b65bbd, #4338e0 60%, #2c6ef2); color: #fff; font-weight: 700; font-size: 11px; line-height: 12px; }
.menuright { gap: 17px; padding-right: 16px; color: #3c3c42; }
.menuright button { gap: 3px; padding-top: 1px; }
.menuright .helpbtn { position: relative; gap: 6px; margin-right: -6px; }
.helpbtn .dot { position: absolute; left: 18px; top: 2px; }

/* ribbon */
.ribbon { height: 99px; flex: none; display: flex; background: #f3f2f8; border-bottom: 1px solid #e1e1e6; }
.group { display: flex; flex-direction: column; padding-top: 10px; position: relative; border-right: 1px solid transparent; border-image: linear-gradient(transparent 9px, #dcdce2 9px, #dcdce2 89px, transparent 89px) 1; }
.row { display: flex; align-items: center; height: 24px; margin-bottom: 11px; }
.row button { height: 24px; }
.row + .label, .stylebody + .label, .tall + .label { margin-top: -4px; }
.label { display: grid; grid-template-columns: 1fr auto 1fr; font-size: 11px; color: #77777d; align-items: center; }
.label span { grid-column: 2; }
.launch { justify-self: end; margin-right: 10px; }
.launch svg { width: 12px; height: 12px; color: #333; }
.b { width: 28px; }
.w32 { width: 32px; }
.clip { width: 90px; }
.clip .row { gap: 4px; padding-left: 10px; }
.font { width: 371px; }
.font .row { padding-left: 11px; }
.font .fields { padding-left: 16px; }
.combo { display: flex; align-items: center; background: #fff; border-radius: 4px; height: 24px; padding: 0 4px 0 6px; }
.wide { width: 165px; margin-right: 9px; gap: 9px; }
.num { width: 64px; margin-right: 3px; padding-left: 13px; }
.glyph { width: 20px; height: 18px; text-align: center; font-size: 15px; line-height: 15px; border-bottom: 3px solid #111; color: #333; margin-top: 2px; }
.tools { width: 190px; }
.tools .row { gap: 9px; padding-left: 12px; }
.tool { min-width: 71px; padding: 0 3px 0 6px; justify-content: flex-start; gap: 6px; border-radius: 4px; }
.tool .caret { margin-left: -1px; }
.tool.on { background: #e3e2e8; }
.styles { width: 454px; }
.stylebody { display: flex; height: 70px; align-items: flex-start; padding-left: 16px; }
.gallery { display: flex; align-items: center; gap: 8px; width: 352px; height: 58px; padding: 2px 0 0 12px; background: #fff; border-radius: 6px; }
.gallery button { width: 32px; height: 32px; border: 1px solid #4d6f7a; border-radius: 4px; font-size: 12px; color: #222; }
.gallery .c2 { border-color: #4a5673; }
.gallery .c3 { border-color: #85584f; }
.gallery .c4 { border-color: #8b6b45; }
.gallery .c5 { border-color: #4b6487; }
.gallery .sel { outline: 1px solid #2f7de0; outline-offset: 3px; }
.scroller { flex: 1; align-self: stretch; display: flex; flex-direction: column; align-items: center; justify-content: space-between; padding: 6px 0 7px; }
.stack { display: flex; flex-direction: column; padding-left: 16px; }
.stack button { height: 20px; }
.stack span:not(.caret) { margin: 0 1px 0 4px; }
.arrange { width: 251px; }
.arrange .row { gap: 7px; padding-left: 12px; }
.replace { width: 94px; }
.tall { flex-direction: column; justify-content: flex-start; height: 70px; padding-top: 2px; }
.tall span:not(.caret) { margin-top: 7px; }
.tall .caret { margin-top: 1px; }

/* work area */
.workspace { flex: 1; min-height: 0; display: grid; grid-template-columns: 220px minmax(0, 1fr) 34px; background: #fff; }
.sidebar { display: flex; flex-direction: column; min-height: 0; overflow: hidden; }
.sidebar > * { flex: none; }
.sidehead { display: flex; align-items: center; padding: 6px 10px 0 12px; height: 33px; gap: 8px; color: #3d3d42; }
.more { font-size: 13px; font-weight: 700; color: #222; gap: 3px; flex: 1; justify-content: flex-start; }
.search { display: flex; align-items: center; height: 32px; margin: 8px 10px 0 8px; padding: 0 6px 0 10px; background: #f3f2f8; border-radius: 6px; }
.search input { flex: 1; min-width: 0; }
.search input::placeholder { color: #85858b; }
.search button { width: 40px; height: 20px; border-radius: 3px; background: #007bff; color: #fff; }
.libhead { display: flex; justify-content: space-between; margin: 8px 14px 0 16px; padding-top: 15px; border-top: 1px solid #e4e4e8; }
.libhead button { gap: 3px; }
.libhead button:first-child { gap: 4px; }
.peek { width: 40px; height: 10px; margin-left: 11px; border-bottom: 1px solid #a9a9ae; }
.sidebar .lists { flex: 1; margin-top: 17px; position: relative; min-height: 0; overflow: hidden; }
.secthead { display: flex; align-items: center; height: 36px; width: 212px; padding: 0 3px 0 10px; gap: 5px; background: #eeeef1; border-radius: 6px; color: #111; }
.secthead button { color: #555; width: 16px; height: 16px; }
.secthead button .s { width: 12px; height: 12px; }
.symbols { display: grid; grid-template-columns: repeat(4, 50px); padding: 8px 0 6px 5px; }
.symbols svg { width: 50px; height: 50px; stroke: #9a9aa0; }
.symbols .yes { font-size: 10px; fill: #77777d; stroke: none; }
.symbols .tiny { font-size: 4px; fill: #77777d; stroke: none; text-anchor: middle; }
.bpmn svg { stroke: none; }
.bpmn .ink { stroke: #222; }
.sidethumb { position: absolute; left: 212px; top: 13px; width: 6px; height: 37px; border-radius: 3px; background: #dedee4; }

.editor { display: flex; flex-direction: column; min-width: 0; min-height: 0; border-left: 1px solid #dfe1e8; border-right: 1px solid #dcdce2; }
.doctabs { display: flex; height: 26px; flex: none; border-bottom: 1px solid #dfe1e8; }
.doctab { width: 160px; padding: 1px 13px 0 12px; gap: 4px; background: #f5f4f9; border-right: 1px solid #e2e2e8; }
.doctab .s { color: #707076; }
.doctab span { flex: 1; text-align: left; }
.doctab .xs { color: #555; margin-right: -3px; }
.current { background: #fff; color: #0a78f0; font-weight: 700; }
.current .s { color: #3a97f5; }
.addtab { width: 24px; color: #333; }
.ruler-h { height: 16px; flex: none; padding: 0 14px 0 17px; border-bottom: 1px solid #e4e4ea; }
.ruler-h svg { width: 100%; height: 15px; overflow: hidden; }
.stage { flex: 1; min-height: 0; display: grid; grid-template-columns: 17px minmax(0, 1fr) 14px; }
.ruler-v { min-height: 0; overflow: hidden; }
.ruler-v svg { width: 17px; height: 100%; }
.ruler-h text, .ruler-v text { font-size: 9px; fill: #66666b; stroke: none; }
.ruler-h path, .ruler-v path { stroke: #dcdce1; }
.canvas { position: relative; overflow: hidden; background: #ebebf1; }
.drawing { width: 100%; height: 100%; stroke: none; }
.shape { fill: #fff; stroke: #17172e; }
.wire { stroke: #111; }
.caption { font-size: 13px; fill: #222; text-anchor: middle; }
.selection { fill: #fff; stroke: #2a7de1; }
.selection .dash { fill: none; stroke: #2a7de1; stroke-dasharray: 4 3; }
.vscroll { padding: 190px 2px 62px; display: flex; }
.vthumb { flex: 1; border-radius: 5px; background: #cfd0d2; }
.hscroll { height: 14px; flex: none; padding: 2px 139px 2px 110px; border-bottom: 1px solid #ececf0; display: flex; }
.hthumb { flex: 1; border-radius: 5px; background: #cfd0d2; }
.palette { height: 17px; flex: none; display: flex; padding-right: 56px; align-items: center; }
.fillpick { width: 35px; padding-left: 2px; color: #55555a; }
.swatches { flex: 1; display: flex; gap: 2px; }
.swatches i { flex: 1; height: 14px; border-radius: 2px; }
.rightbar { display: flex; flex-direction: column; }
.rightbar button { height: 32px; color: #77777d; }
.rightbar .fillpanel { height: 35px; background: #007bff; }
.fillpanel .i { color: #fff; }

/* floating format bar */
.floatbar { position: absolute; left: 539px; top: 149px; width: 406px; height: 66px; display: flex; background: #fff; border-radius: 6px; box-shadow: 0 1px 6px #00002030; }
.floatbar > * { flex: none; }
.fb-font { width: 160px; padding: 7px 0 0 4px; border-right: 1px solid #ececf0; }
.fb-row { display: flex; height: 22px; }
.fb-row + .fb-row { margin-top: 6px; }
.fb-row button { width: 30px; }
.fb-row .glyph { margin-top: 0; border-bottom-width: 2px; }
.fb-fields { gap: 7px; padding-left: 5px; }
.combo.mini { width: 88px; height: 22px; padding: 0 4px 0 5px; border: 1px solid #ececf0; gap: 1px; }
.combo.small { width: 47px; padding-left: 7px; }
.fb-group { display: flex; justify-content: center; border-right: 1px solid #ececf0; font-size: 11px; }
.fb-group button { flex-direction: column; justify-content: flex-start; gap: 9px; padding-top: 13px; width: 40px; }
.one { width: 50px; }
.three { width: 131px; }
.one:nth-child(4) { border-color: transparent; }
.floatbar .fb-end { flex: 1; display: flex; flex-direction: column; justify-content: space-between; align-items: flex-start; padding: 4px 0 4px; margin-left: -2px; color: #8a8a90; }

/* status bar */
.statusbar { height: 30px; flex: none; display: flex; align-items: stretch; background: linear-gradient(#e3e2ed, #dfe3ef); }
.statusbar button { height: 30px; }
.pagesbtn { width: 49px; padding-left: 7px; }
.pg { width: 24px; height: 16px; color: #444; }
.pagesel { width: 120px; padding: 0 9px 0 7px; display: flex; align-items: center; border: 1px solid #dcdce8; border-width: 0 1px; }
.addpage { width: 49px; }
.pagetab { width: 80px; padding-right: 4px; color: #0a78f0; font-weight: 700; border: 1px solid #dcdce8; border-width: 0 1px; }
.ime { align-self: center; margin-left: auto; width: 62px; height: 26px; display: flex; align-items: center; justify-content: center; gap: 4px; background: #fff; border: 1px solid #77777d; border-radius: 5px; white-space: nowrap; box-shadow: 0 1px 2px #0005; }
.stat { width: 635px; margin-left: 147px; display: flex; align-items: center; }
.count { width: 110px; height: 28px; }
.count > div { display: flex; justify-content: space-between; padding: 5px 3px 0 0; white-space: nowrap; }
.count a { color: #f58a1f; text-decoration: none; }
progress { display: block; appearance: none; width: 106px; height: 4px; margin-top: 3px; border: 0; }
progress::-webkit-progress-bar { background: #d3d3df; border-radius: 2px; }
progress::-webkit-progress-value { background: #007bff; border-radius: 2px; }
.stat > .s { margin: 0 15px 0 2px; }
.sid { width: 84px; white-space: nowrap; }
.ic { width: 31px; }
.focusbtn { width: 72px; gap: 7px; padding-right: 1px; justify-content: center; }
.zoomval { gap: 5px; width: 56px; }
.zb { width: 24px; }
.zb .xs { color: #333; }
.stat input { appearance: none; width: 96px; height: 16px; }
.stat input::-webkit-slider-runnable-track { height: 3px; background: linear-gradient(90deg, #333 25%, #fafafd 25%); border-radius: 2px; }
.stat input::-webkit-slider-thumb { appearance: none; width: 12px; height: 12px; margin-top: -5px; border-radius: 50%; background: #fff; border: 2px solid #333; }

/* overlays */
.annotations { position: absolute; left: 0; top: 0; width: 100%; height: 100%; pointer-events: none; stroke: none; filter: drop-shadow(2px 3px 2px #0007); }
.shaft { stroke: #d81414; stroke-width: 3; }
.watermark { position: absolute; right: 10px; bottom: 6px; display: flex; gap: 2px; pointer-events: none; opacity: .75; align-items: center; }
.watermark svg { width: 46px; height: 48px; stroke: none; }
.watermark div { display: flex; flex-direction: column; }
.watermark b { font-size: 21px; line-height: 24px; font-weight: 500; color: #3d8fd6; text-shadow: 0 0 2px #fff; }
.watermark span { font: 17px/20px "Liberation Sans", sans-serif; color: #2fae62; }
```
FILE: script.js
```js
// Rulers are drawn in millimetres: 10 mm is 37.8 px at 96 dpi.
const STEP = 37.8;

function horizontalRuler() {
  // Only the last digit of the -70 label is inside the view.
  let out = '<text x="0" y="11">0</text>';
  for (let mm = -70; mm <= 360; mm += 10) {
    const x = Math.round(254 + (mm / 10) * STEP) + 0.5;
    out += `<path d="M${x} 0v16M${x + 19} 10v6"/>`;
    if (mm > -70) out += `<text x="${x + 2}" y="11">${mm}</text>`;
  }
  document.getElementById("rulerH").innerHTML = out;
}

function verticalRuler() {
  let out = "";
  for (let mm = 30; mm <= 230; mm += 10) {
    const y = Math.round(-126 + (mm / 10) * STEP) + 0.5;
    out += `<path d="M0 ${y}h17M10 ${y + 19}h7"/>`;
    if (mm > 30) out += `<text text-anchor="end" transform="translate(10 ${y + 2}) rotate(-90)">${mm}</text>`;
  }
  document.getElementById("rulerV").innerHTML = out;
}

const COLORS = `ac1426 cf0a33 ea4560 f56284 f79bb0 278290 3aabbf 40c1de 63dff0 a0ecfb f15a24 ff7f33 ff951e fdb50f fcc260
179a82 16b59c 18cab0 66dac6 88ebdb 9a2a5e c54c8c e0609f f580c0 efc1db 638c14 759f28 9bbf27 b2d24b d2e191
1e27ab 3340d5 6e43ee 8d6ff1 ad93f7 fcca05 fcda33 efe82f f8f549 fbff88 9b51d6 c34ee8 d46ff6 bb83fb da9df9
2f7f41 39a155 51ae74 62bb86 8cd8ac e5342d fb4438 fe5c58 fd7171 fe9088 2340a0 2b50d2 346af0 6888fb 89adf5
783308 963b05 ae4524 d25c42 e57855 168dd8 2a99ef 3eacfd 3dcdfb 68e2fd 7c523b 975f45 b67850 d88761 fa9a6c
857b73 afac9a cccab7 e5dccd f3eeda 1b1b1b 2e2e2e 444444 8c8c8c 9a9a9a b4b4b4 cccccc e2e2e2`.split(/\s+/);

document.getElementById("swatches").innerHTML = COLORS.map(c => `<i style="background:#${c}"></i>`).join("");
horizontalRuler();
verticalRuler();
```
